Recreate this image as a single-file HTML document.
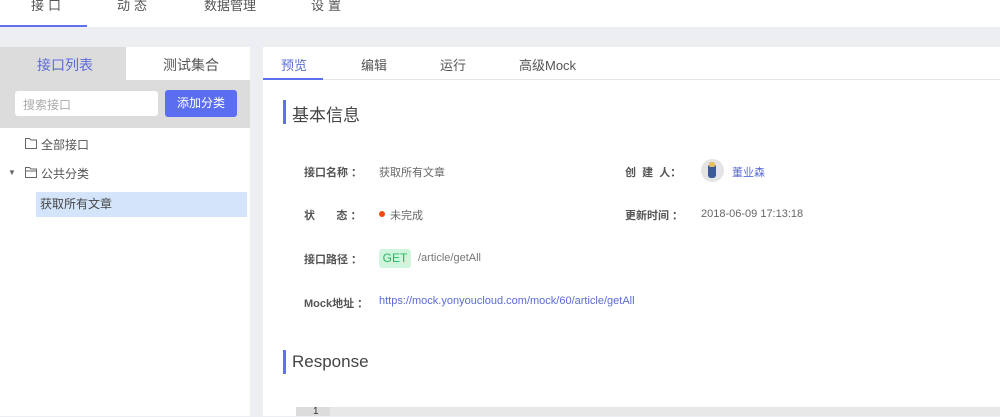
<!DOCTYPE html>
<html><head><meta charset="utf-8"><style>
*{margin:0;padding:0;box-sizing:border-box}
body{width:1000px;height:416px;overflow:hidden;background:#eceef2;font-family:"Liberation Sans","Noto Sans CJK SC",sans-serif;position:relative;color:#333}
.a{position:absolute;white-space:nowrap}
</style></head><body>
<div class="a" style="left:0;top:0;width:1000px;height:27px;background:#fff"></div>
<div class="a" style="left:0;top:25px;width:87px;height:2px;background:#6070f0"></div>
<div class="a" style="left:31px;top:-5px;font-size:13px;color:#555;letter-spacing:4px">接口</div>
<div class="a" style="left:117px;top:-5px;font-size:13px;color:#555;letter-spacing:4px">动态</div>
<div class="a" style="left:204px;top:-5px;font-size:13px;color:#555">数据管理</div>
<div class="a" style="left:311px;top:-5px;font-size:13px;color:#555;letter-spacing:4px">设置</div>

<div class="a" style="left:0;top:47px;width:250px;height:369px;background:#fff"></div>
<div class="a" style="left:0;top:47px;width:126px;height:33px;background:#dcdcdc"></div>
<div class="a" style="left:0;top:80px;width:250px;height:48px;background:#dcdcdc"></div>
<div class="a" style="left:37px;top:55px;font-size:14px;color:#5b6bd6">接口列表</div>
<div class="a" style="left:163px;top:55px;font-size:14px;color:#555">测试集合</div>
<div class="a" style="left:15px;top:91px;width:143px;height:25px;background:#fff;border-radius:3px;font-size:12px;color:#aaa;padding:5px 8px">搜索接口</div>
<div class="a" style="left:165px;top:90px;width:72px;height:27px;background:#5b6ef2;border-radius:3px;font-size:12px;color:#fff;text-align:center;line-height:27px">添加分类</div>
<svg class="a" style="left:25px;top:138px" width="12" height="11"><path d="M.5 .5h4l1.5 1.5h5.5v8.5h-11z" fill="none" stroke="#666"/></svg>
<div class="a" style="left:41px;top:136px;font-size:12px;color:#555">全部接口</div>
<div class="a" style="left:8px;top:168px;font-size:8px;color:#666">▼</div>
<svg class="a" style="left:25px;top:167px" width="12" height="11"><path d="M.5 .5h4l1.5 1.5h5.5v8.5h-11z M.5 4h11" fill="none" stroke="#666"/></svg>
<div class="a" style="left:41px;top:165px;font-size:12px;color:#555">公共分类</div>
<div class="a" style="left:36px;top:192px;width:211px;height:25px;background:#d4e5fb"></div>
<div class="a" style="left:40px;top:195px;font-size:12px;color:#444">获取所有文章</div>

<div class="a" style="left:263px;top:47px;width:737px;height:369px;background:#fff"></div>
<div class="a" style="left:263px;top:79px;width:737px;height:1px;background:#e4e4e4"></div>
<div class="a" style="left:263px;top:78px;width:60px;height:2px;background:#6070f0"></div>
<div class="a" style="left:281px;top:55px;font-size:13px;color:#5b6bd6">预览</div>
<div class="a" style="left:361px;top:55px;font-size:13px;color:#555">编辑</div>
<div class="a" style="left:440px;top:55px;font-size:13px;color:#555">运行</div>
<div class="a" style="left:519px;top:55px;font-size:13px;color:#555">高级Mock</div>
<div class="a" style="left:283px;top:100px;width:3px;height:24px;background:#6070f0"></div>
<div class="a" style="left:292px;top:101px;font-size:17px;color:#444">基本信息</div>

<div class="a" style="left:304px;top:164px;font-size:11px;font-weight:bold;color:#555">接口名称 ：</div>
<div class="a" style="left:379px;top:164px;font-size:11px;color:#666">获取所有文章</div>
<div class="a" style="left:625px;top:164px;font-size:11px;font-weight:bold;color:#555;word-spacing:0">创&nbsp;&nbsp;建&nbsp;&nbsp;人：</div>
<div class="a" style="left:701px;top:159px;width:23px;height:23px;border-radius:50%;background:#e4e4e4"></div>
<div class="a" style="left:708px;top:164px;width:8px;height:14px;background:#3a5a9a;border-radius:3px"></div>
<div class="a" style="left:709px;top:162px;width:6px;height:5px;background:#e8c060;border-radius:2px"></div>
<div class="a" style="left:732px;top:164px;font-size:11px;color:#5b6bd6">董业森</div>

<div class="a" style="left:304px;top:207px;font-size:11px;font-weight:bold;color:#555">状&nbsp;&nbsp;&nbsp;&nbsp;&nbsp;&nbsp;&nbsp;态 ：</div>
<div class="a" style="left:379px;top:211px;width:6px;height:6px;border-radius:50%;background:#f04a10"></div>
<div class="a" style="left:390px;top:207px;font-size:11px;color:#666">未完成</div>
<div class="a" style="left:625px;top:207px;font-size:11px;font-weight:bold;color:#555">更新时间 ：</div>
<div class="a" style="left:701px;top:208px;font-size:11px;color:#666">2018-06-09 17:13:18</div>

<div class="a" style="left:304px;top:251px;font-size:11px;font-weight:bold;color:#555">接口路径 ：</div>
<div class="a" style="left:379px;top:249px;width:32px;height:19px;background:#cff5dd;border-radius:3px;font-size:12px;color:#2cb55f;text-align:center;line-height:19px">GET</div>
<div class="a" style="left:418px;top:252px;font-size:11px;color:#777">/article/getAll</div>

<div class="a" style="left:304px;top:295px;font-size:11px;font-weight:bold;color:#555">Mock地址 ：</div>
<div class="a" style="left:379px;top:295px;font-size:11px;color:#5b6bd6">https://mock.yonyoucloud.com/mock/60/article/getAll</div>

<div class="a" style="left:283px;top:350px;width:3px;height:24px;background:#6070f0"></div>
<div class="a" style="left:292px;top:352px;font-size:17px;color:#444">Response</div>
<div class="a" style="left:296px;top:407px;width:704px;height:9px;background:#e8e8e8"></div>
<div class="a" style="left:296px;top:407px;width:34px;height:9px;background:#dcdcdc"></div>
<div class="a" style="left:313px;top:406px;font-size:10px;color:#333">1</div>
</body></html>
